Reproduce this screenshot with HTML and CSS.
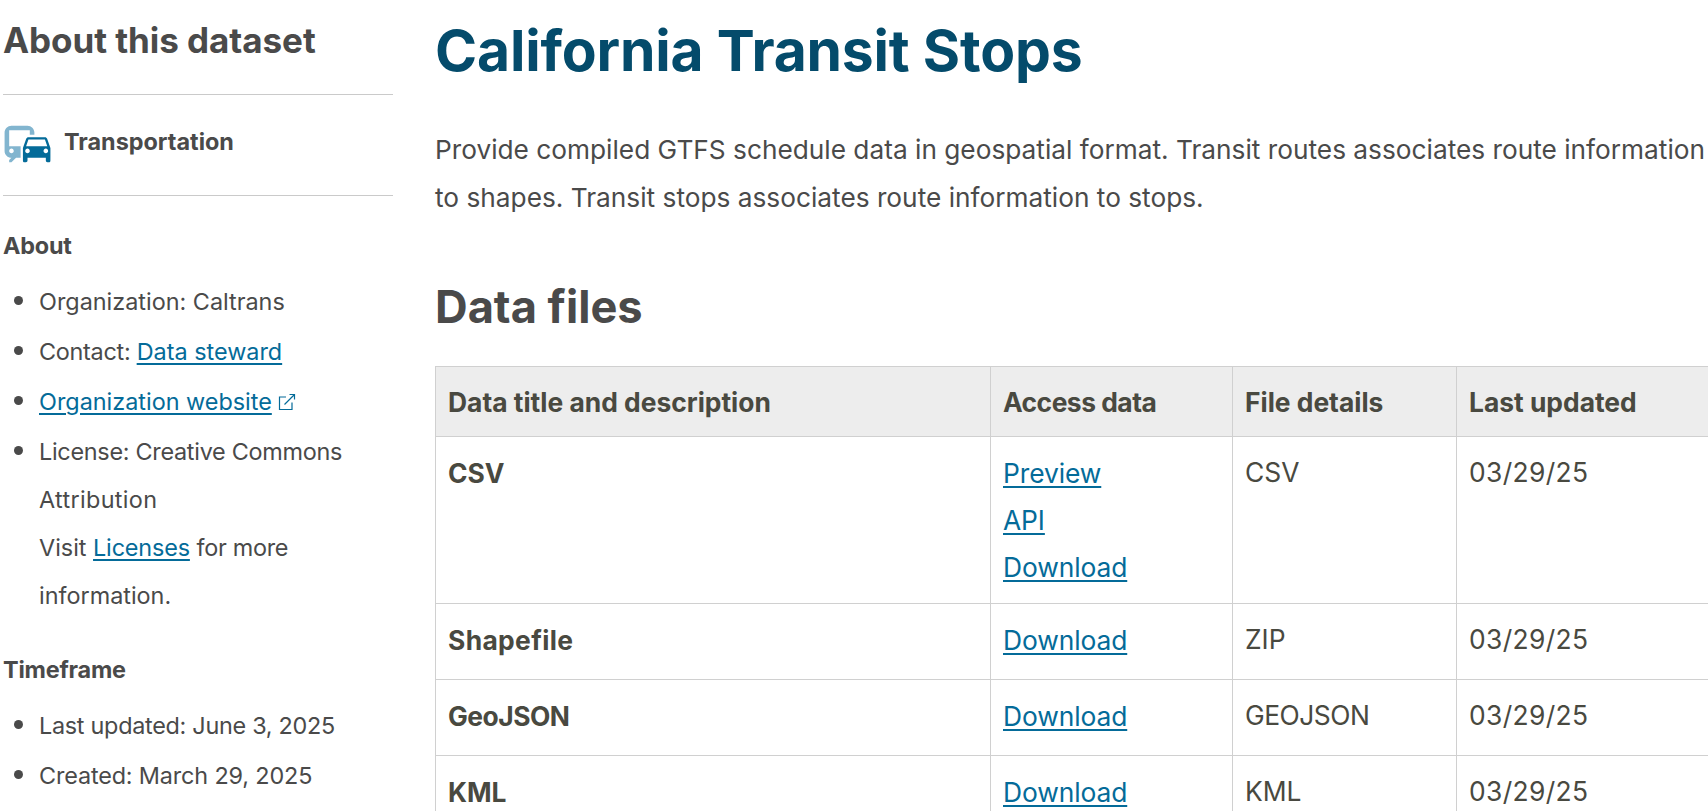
FILE: index.html
```html
<!DOCTYPE html>
<html lang="en">
<head>
<meta charset="utf-8">
<title>California Transit Stops</title>
<link rel="stylesheet" href="styles.css">
</head>
<body>
<div class="layout">
  <aside class="sidebar">
    <h2 class="side-title">About this dataset</h2>
    <div class="topic">
      <svg class="topic-icon" viewBox="0 0 24 24" aria-hidden="true">
        <path class="bus" d="M12 4H5C3.34 4 2 5.34 2 7v8c0 1.66 1.34 3 3 3l-1 1v1h1l2-2.03L9 18v-5H4V5.98L13 6v2h2V7c0-1.66-1.34-3-3-3zM5 14c.55 0 1 .45 1 1s-.45 1-1 1-1-.45-1-1 .45-1 1-1z"/>
        <path class="car" d="M20.57 9.66c-.14-.4-.52-.66-.97-.66h-7.19c-.46 0-.83.26-.98.66L10 13.77l.01 5.51c0 .38.31.72.69.72h.62c.38 0 .68-.38.68-.76V18h8v1.24c0 .38.31.76.69.76h.61c.38 0 .69-.34.69-.72l.01-1.37v-4.14l-1.43-4.11zm-8.16.34h7.19l1.03 3h-9.25l1.03-3zM12 16c-.55 0-1-.45-1-1s.45-1 1-1 1 .45 1 1-.45 1-1 1zm8 0c-.55 0-1-.45-1-1s.45-1 1-1 1 .45 1 1-.45 1-1 1z"/>
      </svg>
      <span class="topic-name">Transportation</span>
    </div>
    <h3 class="side-heading">About</h3>
    <ul class="facts">
      <li>Organization: Caltrans</li>
      <li><span class="snug">Contact: </span><a href="#">Data steward</a></li>
      <li><a href="#">Organization website</a><svg class="external" viewBox="0 0 18 18" aria-hidden="true"><path d="M8 4H1.500v12.500H14V9.500M6.500 11.500 16.500 1.500M11.500 1.500h5v5"/></svg></li>
      <li><span class="snug">License: Creative Commons</span> <span class="loose">Attribution</span><br>Visit <a class="tight" href="#">Licenses</a> <span class="snug">for more</span> information.</li>
    </ul>
    <h3 class="side-heading side-heading-next">Timeframe</h3>
    <ul class="facts">
      <li><span class="snug">Last updated: June 3, 2025</span></li>
      <li><span class="tight">Created: March 29, 2025</span></li>
    </ul>
  </aside>
  <main class="content">
    <h1 class="title">California Transit Stops</h1>
    <p class="intro">Provide compiled GTFS schedule data in geospatial format. Transit routes associates route information to shapes. Transit stops associates route information to stops.</p>
    <h2 class="section-title">Data files</h2>
    <table class="files">
      <thead>
        <tr><th class="c1">Data title and description</th><th class="c2 snugger">Access data</th><th class="c3">File details</th><th class="c4">Last updated</th></tr>
      </thead>
      <tbody>
        <tr><td class="name">CSV</td><td class="links"><a href="#">Preview</a><a href="#">API</a><a href="#">Download</a></td><td>CSV</td><td class="loose">03/29/25</td></tr>
        <tr><td class="name loose">Shapefile</td><td class="links"><a href="#">Download</a></td><td>ZIP</td><td class="loose">03/29/25</td></tr>
        <tr><td class="name snugger">GeoJSON</td><td class="links"><a href="#">Download</a></td><td class="snugger">GEOJSON</td><td class="loose">03/29/25</td></tr>
        <tr><td class="name">KML</td><td class="links"><a href="#">Download</a></td><td>KML</td><td class="loose">03/29/25</td></tr>
      </tbody>
    </table>
  </main>
</div>
</body>
</html>
```
FILE: styles.css
```css
* { box-sizing: border-box; }
body { margin: 0; height: 811px; overflow: hidden; background: #fff; color: #4a4a4a; font-family: Inter, "Liberation Sans", sans-serif; }
h1, h2, h3, p, ul { margin: 0; }
a { color: #046b99; text-decoration: underline; text-decoration-thickness: 2px; text-underline-offset: 3px; text-decoration-skip-ink: auto; }
.tight { letter-spacing: -0.15px; }
.snug { letter-spacing: -0.28px; }
.snugger { letter-spacing: -0.5px; }
.loose { letter-spacing: 0.35px; }
.layout { display: grid; grid-template-columns: 390px 1273px; column-gap: 42px; padding-left: 3px; }
.side-title { height: 95px; padding-top: 20px; border-bottom: 1px solid #cacaca; font-size: 35px; line-height: 40px; font-weight: 700; letter-spacing: -0.05px; }
.topic { display: flex; align-items: flex-start; gap: 9px; height: 101px; padding-top: 21px; border-bottom: 1px solid #cacaca; font-size: 23.4px; line-height: 51px; font-weight: 700; }
.topic-icon { width: 55px; height: 56px; margin-left: -3px; }
.bus { fill: #82b5cf; }
.car { fill: #046b99; }
.side-heading { padding-top: 33px; font-size: 23.4px; line-height: 34px; font-weight: 700; letter-spacing: -0.2px; }
.side-heading-next { padding-top: 31px; }
.facts { padding: 15px 0 0 36px; font-size: 23.4px; line-height: 48px; list-style: none; }
.facts li { position: relative; margin-bottom: 2px; }
.facts li::before { content: ""; position: absolute; left: -25px; top: 18px; width: 9px; height: 9px; border-radius: 50%; background: #4a4a4a; }
.external { width: 18px; height: 18px; margin-left: 6px; vertical-align: -1px; fill: none; stroke: #046b99; stroke-width: 1.2; }
.title { padding-top: 16px; color: #044b6b; font-size: 57px; line-height: 70px; font-weight: 700; letter-spacing: -0.18px; }
.intro { padding-top: 40px; font-size: 26.25px; line-height: 48px; }
.section-title { padding-top: 57px; font-size: 45.2px; line-height: 56px; font-weight: 700; }
.files { width: 1400px; margin-top: 31px; table-layout: fixed; border-collapse: collapse; font-size: 26.4px; line-height: 44px; color: #494940; }
.files th, .files td { padding: 13px 12px 12px; border: 1px solid #d0d0d0; text-align: left; vertical-align: top; }
.files th { background: #ededed; font-weight: 700; }
.files tbody tr { height: 76px; }
.c1 { width: 555px; }
.c2 { width: 242px; }
.c3 { width: 224px; }
.files .name { font-weight: 700; line-height: 47px; }
.files .links { line-height: 47px; }
.links a { display: table; letter-spacing: -0.1px; }
```
